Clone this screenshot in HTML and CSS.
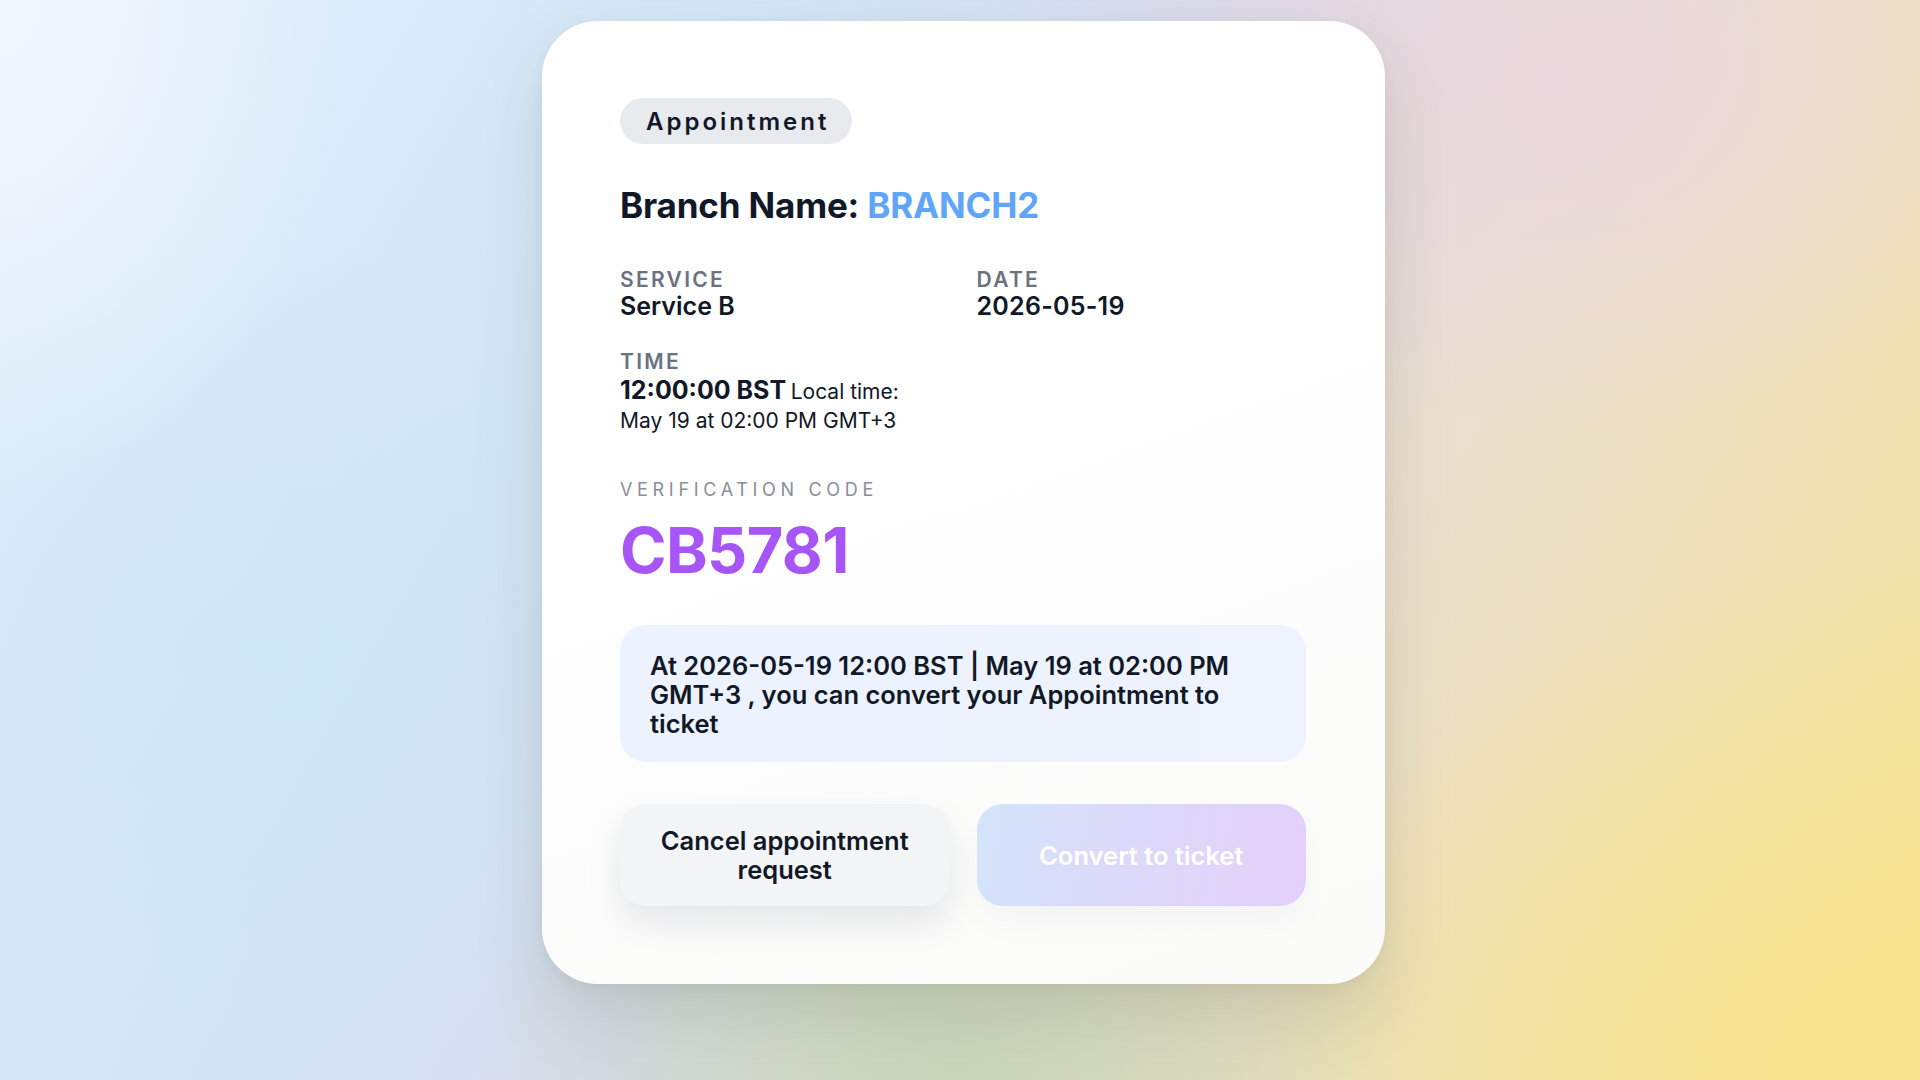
FILE: index.html
```html
<!DOCTYPE html>
<html lang="en">
<head>
<meta charset="utf-8">
<title>Appointment</title>
<link rel="stylesheet" href="styles.css">
</head>
<body>
<main class="stage">
  <section class="card">
    <span class="badge">Appointment</span>
    <h1 class="branch">Branch Name: <span class="branch-value">BRANCH2</span></h1>
    <div class="details">
      <div class="field">
        <div class="label">SERVICE</div>
        <div class="value">Service B</div>
      </div>
      <div class="field">
        <div class="label">DATE</div>
        <div class="value value-date">2026-05-19</div>
      </div>
      <div class="field">
        <div class="label">TIME</div>
        <div class="time"><span class="value-inline">12:00:00 BST</span> <span class="local">Local time:<br>May 19 at 02:00 PM GMT+3</span></div>
      </div>
    </div>
    <div class="code-label">VERIFICATION CODE</div>
    <div class="code">CB5781</div>
    <div class="notice">At 2026-05-19 12:00 BST | May 19 at 02:00 PM GMT+3 , you can convert your Appointment to ticket</div>
    <div class="actions">
      <button class="btn btn-cancel">Cancel appointment request</button>
      <button class="btn btn-convert">Convert to ticket</button>
    </div>
  </section>
</main>
</body>
</html>
```

FILE: styles.css
```css
* { box-sizing: border-box; }
html, body { margin: 0; padding: 0; }
body {
  width: 1920px;
  height: 1080px;
  overflow: hidden;
  font-family: Inter, "Noto Sans", "Liberation Sans", sans-serif;
  color: #111827;
  background:
    radial-gradient(ellipse 700px 500px at 1560px 80px, rgba(234,214,222,0.9), rgba(234,214,222,0) 70%),
    radial-gradient(ellipse 900px 700px at 1920px 1080px, rgba(248,228,140,1), rgba(248,228,140,0) 75%),
    radial-gradient(ellipse 700px 600px at 960px 1100px, rgba(196,212,180,0.9), rgba(196,212,180,0) 70%),
    radial-gradient(ellipse 500px 700px at 0px 0px, rgba(242,247,254,1), rgba(242,247,254,0) 70%),
    radial-gradient(ellipse 700px 600px at 250px 650px, rgba(204,230,243,0.6), rgba(204,230,243,0) 70%),
    linear-gradient(120deg, #e4f0fc 0%, #d2e6f6 30%, #d8dcee 48%, #ebdfd2 65%, #efe2b0 85%, #f5e496 100%);
}
.stage {
  display: flex;
  justify-content: center;
  padding-top: 21px;
  padding-left: 7px;
}
.card {
  width: 843px;
  padding: 77px 79px 78px 78px;
  background: linear-gradient(160deg, #ffffff 0%, #fdfdfd 60%, #fbfbfa 100%);
  border-radius: 56px;
  box-shadow: 0 30px 70px rgba(70, 80, 50, 0.16), 0 4px 14px rgba(0,0,0,0.04);
  display: flex;
  flex-direction: column;
  align-items: flex-start;
}
.badge {
  display: inline-flex;
  align-items: center;
  height: 46px;
  padding: 0 23px 0 26px;
  background: #e9eaee;
  border-radius: 23px;
  font-size: 24px;
  font-weight: 600;
  letter-spacing: 0.125em;
  color: #111827;
}
.branch {
  margin: 41px 0 0;
  font-size: 35px;
  line-height: 41px;
  font-weight: 700;
  letter-spacing: -0.005em;
  color: #111827;
}
.branch-value { color: #60a5fa; }
.details {
  margin-top: 41px;
  width: 100%;
  display: grid;
  grid-template-columns: 1fr 1fr;
  column-gap: 27px;
  row-gap: 28px;
}
.label {
  font-size: 21px;
  line-height: 25px;
  font-weight: 600;
  letter-spacing: 0.11em;
  color: #6b7280;
}
.value {
  font-size: 25px;
  line-height: 29px;
  font-weight: 600;
  color: #111827;
}
.value-date { letter-spacing: 0.01em; }
.time {
  margin-top: 2px;
  line-height: 28px;
  color: #111827;
}
.value-inline {
  font-size: 25px;
  font-weight: 700;
}
.local {
  font-size: 21px;
  font-weight: 400;
}
.code-label {
  margin-top: 43px;
  font-size: 18px;
  line-height: 22px;
  letter-spacing: 0.26em;
  color: #8a8f99;
}
.code {
  margin-top: 15px;
  font-size: 63px;
  line-height: 68px;
  font-weight: 700;
  letter-spacing: -0.01em;
  color: #a855f7;
}
.notice {
  margin-top: 41px;
  width: 100%;
  padding: 26px 30px 24px;
  background: linear-gradient(90deg, #ecf2fe 0%, #eef3fd 100%);
  border-radius: 26px;
  font-size: 25.5px;
  line-height: 29px;
  font-weight: 600;
  color: #111827;
}
.actions {
  margin-top: 42px;
  width: 100%;
  display: grid;
  grid-template-columns: 1fr 1fr;
  column-gap: 27px;
}
.btn {
  border: 0;
  border-radius: 26px;
  padding: 22px 20px;
  font-family: inherit;
  font-size: 25.5px;
  line-height: 29px;
  font-weight: 600;
  text-align: center;
}
.btn-cancel {
  background: #f3f4f6;
  color: #111827;
  box-shadow: 0 18px 34px rgba(30, 40, 60, 0.10);
}
.btn-convert {
  background: linear-gradient(100deg, #d4e4fb 0%, #dcd8f9 50%, #e4d0fb 100%);
  color: #ffffff;
  box-shadow: 0 18px 34px rgba(30, 40, 60, 0.03);
}
```
